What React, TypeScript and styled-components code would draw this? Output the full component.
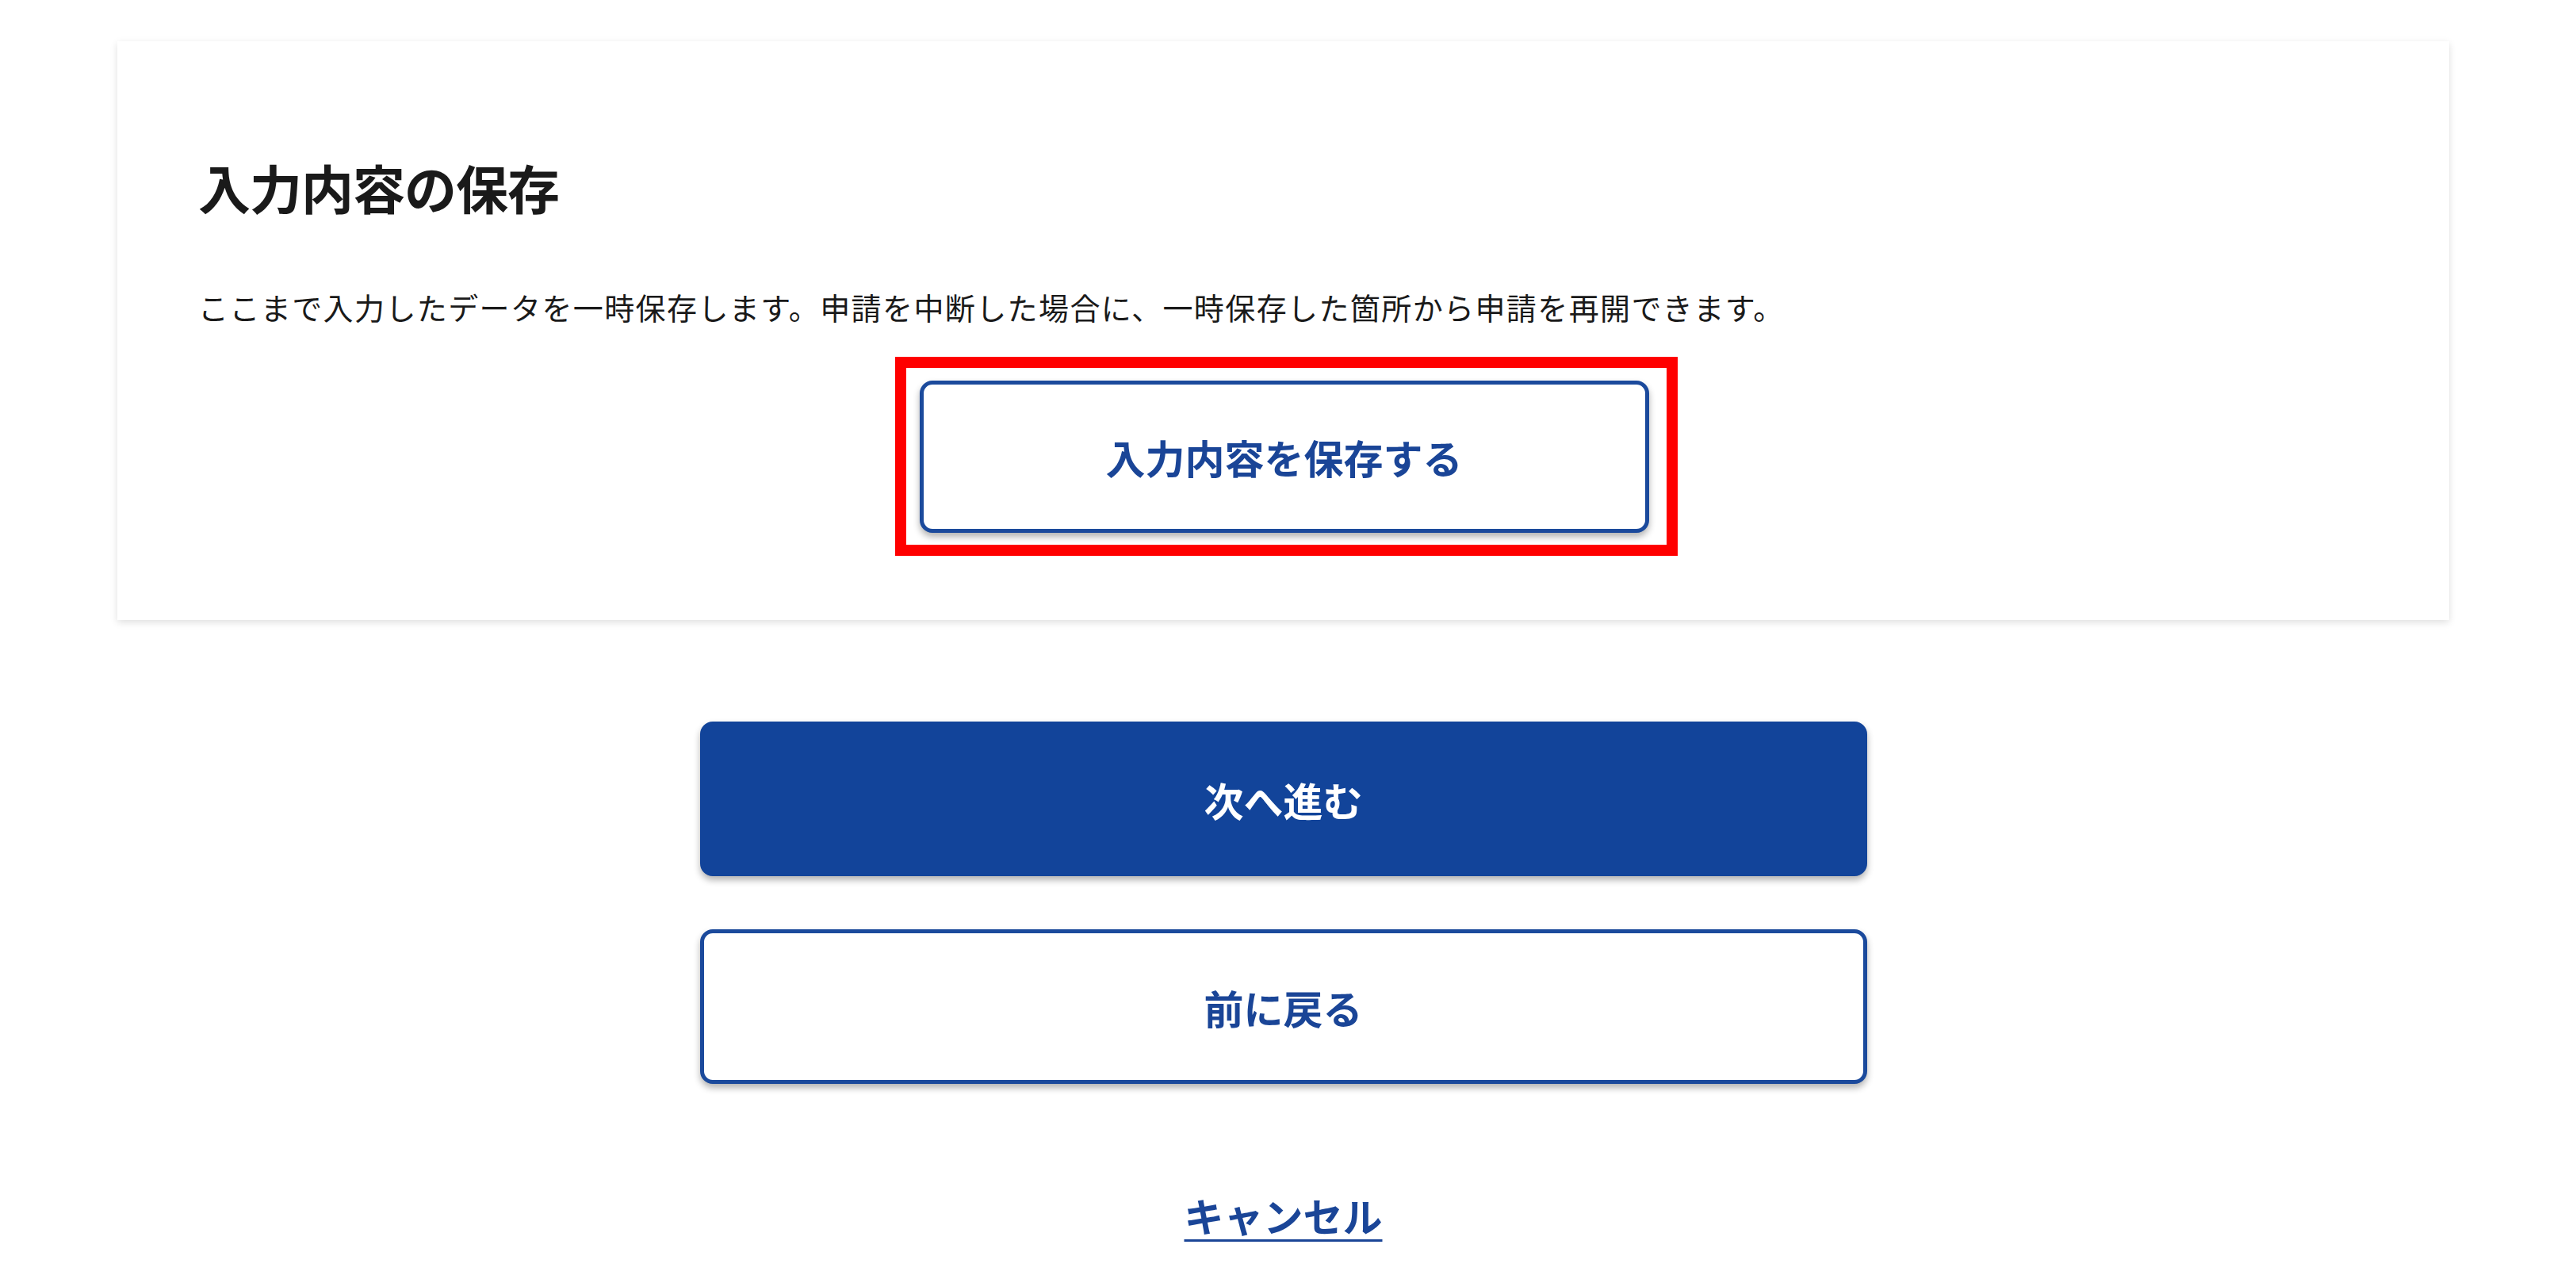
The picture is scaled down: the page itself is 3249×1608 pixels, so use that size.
import React from "react";
import styled, { createGlobalStyle } from "styled-components";

const Global = createGlobalStyle`
  html, body { margin: 0; padding: 0; background: #ffffff; }
  body {
    font-family: "Noto Sans CJK JP", "Noto Sans", sans-serif;
    color: #1a1a1a;
  }
`;

const Page = styled.main`
  box-sizing: border-box;
  width: 2941px;
  margin-left: 148px;
  padding-top: 52px;
  padding-bottom: 40px;
  display: flex;
  flex-direction: column;
  align-items: center;
`;

const Card = styled.section`
  box-sizing: border-box;
  width: 100%;
  background: #ffffff;
  box-shadow: 0 3px 9px rgba(0, 0, 0, 0.13);
  padding: 150px 102px 81px;
  display: flex;
  flex-direction: column;
`;

const Title = styled.h2`
  margin: 0;
  font-size: 66px;
  line-height: 66px;
  font-weight: 700;
  letter-spacing: -1px;
  color: #1a1a1a;
`;

const Lead = styled.p`
  margin: 100px 0 0;
  font-size: 38px;
  line-height: 38px;
  letter-spacing: 1.4px;
  color: #1a1a1a;
`;

const Highlight = styled.div`
  align-self: center;
  margin-top: 44px;
  margin-left: 7px;
  border: 14px solid #ff0000;
  padding: 16px 22px 15px 17px;
  display: flex;
`;

type Size = "small" | "wide";
type Variant = "primary" | "secondary";

const Button = styled.button<{ $variant: Variant; $size: Size }>`
  box-sizing: border-box;
  width: ${(p) => (p.$size === "wide" ? "1472px" : "920px")};
  height: ${(p) => (p.$size === "wide" ? "195px" : "192px")};
  border-radius: 16px;
  border: 5px solid ${(p) => (p.$variant === "primary" ? "#12449a" : "#1b4a9c")};
  background: ${(p) => (p.$variant === "primary" ? "#12449a" : "#ffffff")};
  color: ${(p) => (p.$variant === "primary" ? "#ffffff" : "#1a4597")};
  box-shadow: 0 5px 8px rgba(0, 0, 0, 0.3);
  font-family: "Noto Sans CJK JP", "Noto Sans", sans-serif;
  font-size: 50px;
  font-weight: 700;
  line-height: 1;
  display: flex;
  align-items: center;
  justify-content: center;
  padding: 0;
  cursor: pointer;
`;

const Actions = styled.div`
  margin-top: 128px;
  display: flex;
  flex-direction: column;
  align-items: center;
  gap: 67px;
`;

const CancelLink = styled.a`
  margin-top: 140px;
  font-size: 50px;
  line-height: 50px;
  font-weight: 700;
  color: #1a4597;
  text-decoration: underline;
  text-decoration-thickness: 3px;
  text-underline-offset: 9px;
  cursor: pointer;
`;

export default function App() {
  return (
    <>
      <Global />
      <Page>
        <Card>
          <Title>入力内容の保存</Title>
          <Lead>
            ここまで入力したデータを一時保存します。申請を中断した場合に、一時保存した箇所から申請を再開できます。
          </Lead>
          <Highlight>
            <Button $variant="secondary" $size="small">
              入力内容を保存する
            </Button>
          </Highlight>
        </Card>
        <Actions>
          <Button $variant="primary" $size="wide">
            次へ進む
          </Button>
          <Button $variant="secondary" $size="wide">
            前に戻る
          </Button>
        </Actions>
        <CancelLink href="#">キャンセル</CancelLink>
      </Page>
    </>
  );
}
